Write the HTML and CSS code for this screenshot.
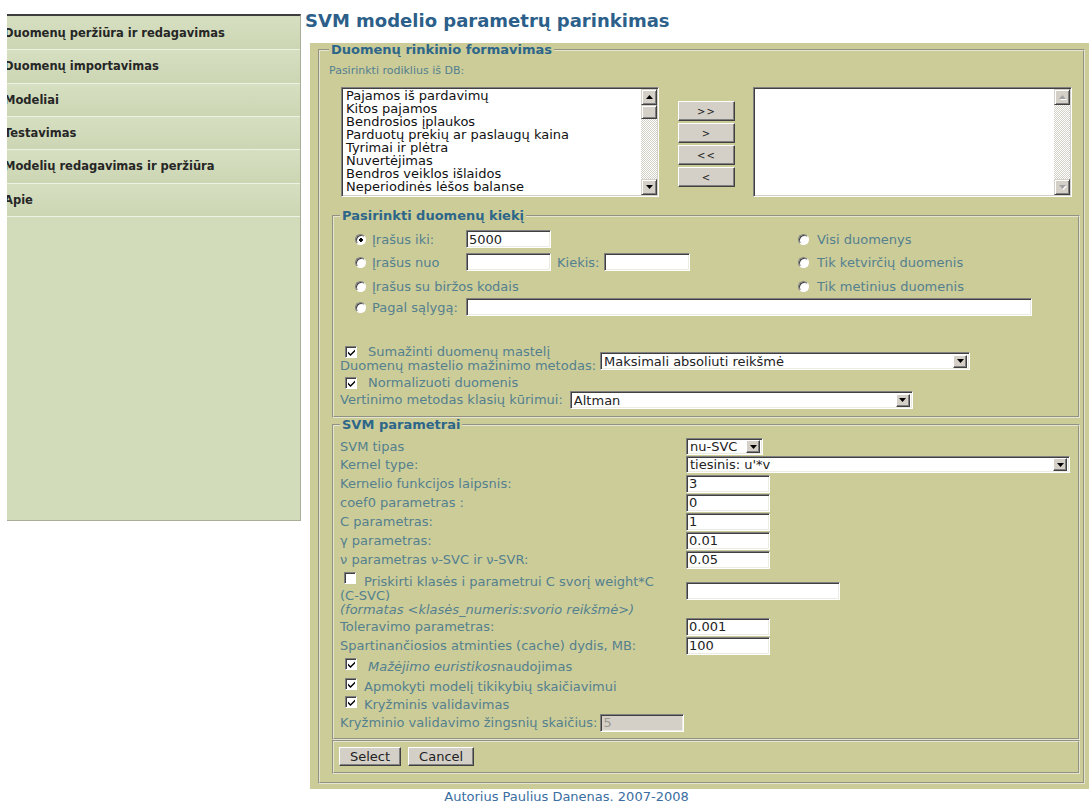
FILE: index.html
```html
<!DOCTYPE html>
<html lang="lt">
<head>
<meta charset="utf-8">
<title>SVM modelio parametrų parinkimas</title>
<link rel="stylesheet" href="styles.css">
</head>
<body>
<div class="page">
  <nav class="sidebar">
    <ul class="menu">
      <li>Duomenų peržiūra ir redagavimas</li>
      <li>Duomenų importavimas</li>
      <li>Modeliai</li>
      <li>Testavimas</li>
      <li>Modelių redagavimas ir peržiūra</li>
      <li>Apie</li>
    </ul>
  </nav>

  <main class="main">
    <h1 class="title">SVM modelio parametrų parinkimas</h1>

    <form class="panel">
      <fieldset class="frame">
        <legend>Duomenų rinkinio formavimas</legend>
        <div class="hint">Pasirinkti rodiklius iš DB:</div>

        <div class="picker">
          <div class="listbox source">
            <ul class="options">
              <li>Pajamos iš pardavimų</li>
              <li>Kitos pajamos</li>
              <li>Bendrosios įplaukos</li>
              <li>Parduotų prekių ar paslaugų kaina</li>
              <li>Tyrimai ir plėtra</li>
              <li>Nuvertėjimas</li>
              <li>Bendros veiklos išlaidos</li>
              <li>Neperiodinės lėšos balanse</li>
            </ul>
            <div class="vscroll">
              <span class="sb-btn"><svg width="7" height="4" viewBox="0 0 7 4"><path d="M3.5 0L7 4H0Z"/></svg></span>
              <span class="sb-thumb"></span>
              <span class="sb-track"></span>
              <span class="sb-btn"><svg width="7" height="4" viewBox="0 0 7 4"><path d="M0 0H7L3.5 4Z"/></svg></span>
            </div>
          </div>

          <div class="movers">
            <button type="button" class="btn mover">&gt;&gt;</button>
            <button type="button" class="btn mover">&gt;</button>
            <button type="button" class="btn mover">&lt;&lt;</button>
            <button type="button" class="btn mover">&lt;</button>
          </div>

          <div class="listbox target">
            <ul class="options"></ul>
            <div class="vscroll off">
              <span class="sb-btn"><svg width="7" height="4" viewBox="0 0 7 4"><path d="M3.5 0L7 4H0Z"/></svg></span>
              <span class="sb-track"></span>
              <span class="sb-btn"><svg width="7" height="4" viewBox="0 0 7 4"><path d="M0 0H7L3.5 4Z"/></svg></span>
            </div>
          </div>
        </div>

        <fieldset class="group amount-group">
          <legend>Pasirinkti duomenų kiekį</legend>
          <div class="amount">
            <div class="opt">
              <input type="radio" class="radio" name="kiekis" checked>
              <span class="opt-label">Įrašus iki:</span>
              <input type="text" class="field w85" value="5000">
            </div>
            <div class="opt right">
              <input type="radio" class="radio" name="laikotarpis">
              <span>Visi duomenys</span>
            </div>

            <div class="opt">
              <input type="radio" class="radio" name="kiekis">
              <span class="opt-label">Įrašus nuo</span>
              <input type="text" class="field w85" value="">
              <span class="kiekis">Kiekis:</span>
              <input type="text" class="field w86" value="">
            </div>
            <div class="opt right">
              <input type="radio" class="radio" name="laikotarpis">
              <span>Tik ketvirčių duomenis</span>
            </div>

            <div class="opt">
              <input type="radio" class="radio" name="kiekis">
              <span>Įrašus su biržos kodais</span>
            </div>
            <div class="opt right">
              <input type="radio" class="radio" name="laikotarpis">
              <span>Tik metinius duomenis</span>
            </div>

            <div class="opt wide">
              <input type="radio" class="radio" name="kiekis">
              <span class="opt-label">Pagal sąlygą:</span>
              <input type="text" class="field w566" value="">
            </div>
          </div>

          <div class="chk-row scale">
            <span class="box"><svg width="7" height="7" viewBox="0 0 7 7"><path d="M0 2.5L2.5 5L7 0.5V2.5L2.5 7L0 4.5Z"/></svg></span>
            <span>Sumažinti duomenų mastelį</span>
          </div>
          <div class="sel-row first">
            <span class="sel-label">Duomenų mastelio mažinimo metodas:</span>
            <div class="select w370">
              <span class="sel-value">Maksimali absoliuti reikšmė</span>
              <span class="sel-arrow"><svg width="7" height="4" viewBox="0 0 7 4"><path d="M0 0H7L3.5 4Z"/></svg></span>
            </div>
          </div>
          <div class="chk-row norm">
            <span class="box"><svg width="7" height="7" viewBox="0 0 7 7"><path d="M0 2.5L2.5 5L7 0.5V2.5L2.5 7L0 4.5Z"/></svg></span>
            <span>Normalizuoti duomenis</span>
          </div>
          <div class="sel-row last">
            <span class="sel-label">Vertinimo metodas klasių kūrimui:</span>
            <div class="select w343">
              <span class="sel-value">Altman</span>
              <span class="sel-arrow"><svg width="7" height="4" viewBox="0 0 7 4"><path d="M0 0H7L3.5 4Z"/></svg></span>
            </div>
          </div>
        </fieldset>

        <fieldset class="group svm-group">
          <legend>SVM parametrai</legend>

          <div class="prm r-type">
            <span class="prm-label">SVM tipas</span>
            <div class="select w77 short">
              <span class="sel-value">nu-SVC</span>
              <span class="sel-arrow"><svg width="7" height="4" viewBox="0 0 7 4"><path d="M0 0H7L3.5 4Z"/></svg></span>
            </div>
          </div>
          <div class="prm r-kernel">
            <span class="prm-label">Kernel type:</span>
            <div class="select w384 short">
              <span class="sel-value">tiesinis: u'*v</span>
              <span class="sel-arrow"><svg width="7" height="4" viewBox="0 0 7 4"><path d="M0 0H7L3.5 4Z"/></svg></span>
            </div>
          </div>
          <div class="prm">
            <span class="prm-label">Kernelio funkcijos laipsnis:</span>
            <input type="text" class="field w84" value="3">
          </div>
          <div class="prm">
            <span class="prm-label">coef0 parametras :</span>
            <input type="text" class="field w84" value="0">
          </div>
          <div class="prm">
            <span class="prm-label">C parametras:</span>
            <input type="text" class="field w84" value="1">
          </div>
          <div class="prm">
            <span class="prm-label">γ parametras:</span>
            <input type="text" class="field w84" value="0.01">
          </div>
          <div class="prm">
            <span class="prm-label">ν parametras ν-SVC ir ν-SVR:</span>
            <input type="text" class="field w84" value="0.05">
          </div>

          <div class="prm weights">
            <div class="prm-label weight-text">
              <span class="box plain"></span><span class="weight-line">Priskirti klasės i parametrui C svorį weight*C</span>
              <span class="weight-line">(C-SVC)</span>
              <em class="weight-line">(formatas &lt;klasės_numeris:svorio reikšmė&gt;)</em>
            </div>
            <input type="text" class="field w154" value="">
          </div>

          <div class="prm">
            <span class="prm-label">Toleravimo parametras:</span>
            <input type="text" class="field w84" value="0.001">
          </div>
          <div class="prm">
            <span class="prm-label">Spartinančiosios atminties (cache) dydis, MB:</span>
            <input type="text" class="field w84" value="100">
          </div>

          <div class="chk-row heur">
            <span class="box"><svg width="7" height="7" viewBox="0 0 7 7"><path d="M0 2.5L2.5 5L7 0.5V2.5L2.5 7L0 4.5Z"/></svg></span>
            <span><em>Mažėjimo euristikos</em>naudojimas</span>
          </div>
          <div class="chk-row tight">
            <span class="box"><svg width="7" height="7" viewBox="0 0 7 7"><path d="M0 2.5L2.5 5L7 0.5V2.5L2.5 7L0 4.5Z"/></svg></span>
            <span>Apmokyti modelį tikikybių skaičiavimui</span>
          </div>
          <div class="chk-row tight short">
            <span class="box"><svg width="7" height="7" viewBox="0 0 7 7"><path d="M0 2.5L2.5 5L7 0.5V2.5L2.5 7L0 4.5Z"/></svg></span>
            <span>Kryžminis validavimas</span>
          </div>
          <div class="folds">
            <span>Kryžminio validavimo žingsnių skaičius:</span>
            <input type="text" class="field w84 disabled" value="5" disabled>
          </div>
        </fieldset>

        <div class="actions">
          <button type="button" class="btn action">Select</button>
          <button type="button" class="btn action">Cancel</button>
        </div>
      </fieldset>
    </form>
  </main>
</div>

<footer class="footer">Autorius Paulius Danenas. 2007-2008</footer>
</body>
</html>
```

FILE: styles.css
```css
* { box-sizing: border-box; }

html, body { margin: 0; padding: 0; }

body {
  width: 1089px;
  height: 801px;
  overflow: hidden;
  background: #fff;
  font-family: "DejaVu Sans", Verdana, sans-serif;
  color: #222;
  --label: #54808e;
  --legend: #2d6689;
  --olive: #cccc99;
  --face: #d4d0c8;
}

.page { display: flex; align-items: flex-start; }

/* ---------- left navigation ---------- */
.sidebar {
  flex: none;
  width: 294px;
  height: 507px;
  margin: 14px 0 0 7px;
  background: #d2dbba;
  border-top: 2px solid #3d3d3d;
  border-right: 1px solid #a9ae98;
  border-bottom: 1px solid #a9ae98;
  overflow: hidden;
}

.menu { list-style: none; margin: 0; padding: 1px 0 0; }

.menu li {
  height: 33.33px;
  line-height: 32px;
  border-bottom: 1px solid #eef2e3;
  background: linear-gradient(#d6dfc1, #ccd6b3);
  font-size: 11.5px;
  font-weight: bold;
  color: #262626;
  text-indent: -3px;
  white-space: nowrap;
}

/* ---------- main column ---------- */
.main { flex: 1; min-width: 0; padding-left: 4px; }

.title {
  margin: 11px 0 12px;
  font-size: 18px;
  line-height: 20px;
  font-weight: bold;
  color: #2c5f8a;
}

.panel {
  height: 746px;
  margin-left: 5px;
  padding: 0 0 0 8px;
  background: var(--olive);
}

fieldset { min-width: 0; }

legend {
  padding: 0 2px;
  font-size: 13px;
  line-height: 14px;
  font-weight: bold;
  color: var(--legend);
}

.frame {
  margin: 0;
  padding: 0 3px 8px 9px;
  border: 2px groove #e6e6d0;
  width: 767px;
}

.hint {
  margin-top: 7px;
  font-size: 11px;
  line-height: 14px;
  color: var(--label);
}

/* ---------- list pickers ---------- */
.picker {
  display: flex;
  align-items: flex-start;
  margin-top: 9px;
  padding-left: 12px;
}

.listbox {
  display: flex;
  width: 318px;
  height: 110px;
  background: #fff;
  border: 1px solid;
  border-color: #808080 #fff #fff #808080;
  box-shadow: inset 1px 1px 0 #404040, inset -1px -1px 0 var(--face);
}

.listbox.target { width: 319px; }

.options {
  flex: 1;
  margin: 0;
  padding: 1px 0 0 4px;
  list-style: none;
  font-size: 13px;
  line-height: 13px;
  color: #111;
  white-space: nowrap;
  overflow: hidden;
}

.vscroll {
  flex: none;
  width: 16px;
  margin: 1px 1px 1px 0;
  display: flex;
  flex-direction: column;
}

.sb-btn {
  flex: none;
  height: 16px;
  display: flex;
  align-items: center;
  justify-content: center;
  background: var(--face);
  border: 1px solid;
  border-color: var(--face) #404040 #404040 var(--face);
  box-shadow: inset 1px 1px 0 #fff, inset -1px -1px 0 #808080;
}

.sb-btn svg { fill: #000; }

.sb-thumb {
  flex: none;
  height: 14px;
  background: var(--face);
  border: 1px solid;
  border-color: var(--face) #404040 #404040 var(--face);
  box-shadow: inset 1px 1px 0 #fff, inset -1px -1px 0 #808080;
}

.sb-track {
  flex: 1;
  background: repeating-conic-gradient(#fff 0 25%, var(--face) 0 50%) 0 0 / 2px 2px;
}

.vscroll.off .sb-btn svg { fill: #a0a0a0; filter: drop-shadow(1px 1px 0 #fff); }

.movers {
  display: flex;
  flex-direction: column;
  gap: 2px;
  margin: 14px 18px 0 19px;
}

.btn {
  padding: 0;
  font-family: inherit;
  color: #222;
  background: var(--face);
  border: 1px solid;
  border-color: #fff #404040 #404040 #fff;
  box-shadow: inset -1px -1px 0 #808080;
}

.mover {
  width: 57px;
  height: 20px;
  font-size: 10px;
  letter-spacing: 1px;
}

/* ---------- inner groups ---------- */
.group {
  margin: 12px 0 0 3px;
  padding: 5px 0 7px 6px;
  border: 2px groove #e6e6d0;
  font-size: 13px;
  color: var(--label);
}

.field {
  height: 18px;
  padding: 0 2px;
  font-family: inherit;
  font-size: 13px;
  color: #222;
  background: #fff;
  border: 1px solid;
  border-color: #808080 #fff #fff #808080;
  box-shadow: inset 1px 1px 0 #404040, inset -1px -1px 0 #ecebe4;
  outline: none;
}

.w84 { width: 84px; }
.w85 { width: 85px; }
.w86 { width: 86px; }
.w154 { width: 154px; }
.w566 { width: 566px; }

.field.disabled { background: var(--face); color: #9a9890; }

.amount {
  display: grid;
  grid-template-columns: 458px 1fr;
  grid-template-rows: 22px 24px 24px 18px;
}

.opt { display: flex; align-items: center; padding-left: 15px; white-space: nowrap; }
.opt.right { padding-left: 0; }
.opt.right .radio { margin-right: 8px; }
.opt.wide { grid-column: 1 / 3; }

.opt-label { width: 94px; }
.kiekis { margin: 0 5px 0 6px; }

.radio {
  appearance: none;
  flex: none;
  width: 11px;
  height: 11px;
  margin: 0 6px 0 0;
  border-radius: 50%;
  background: #fff;
  border: 1px solid;
  border-color: #808080 #fff #fff #808080;
  box-shadow: inset 1px 1px 0 #404040;
}

.radio:checked {
  background: radial-gradient(circle at 55% 55%, #000 0 1.6px, #fff 2px);
}

.chk-row {
  display: flex;
  align-items: flex-start;
  padding-left: 5px;
  height: 14px;
  line-height: 14px;
  white-space: nowrap;
}

.box {
  flex: none;
  width: 12px;
  height: 12px;
  margin: 0 11px 0 0;
  display: flex;
  align-items: center;
  justify-content: center;
  background: #fff;
  border: 1px solid;
  border-color: #808080 #fff #fff #808080;
  box-shadow: inset 1px 1px 0 #404040;
}

.box svg { fill: #000; margin: 1px 0 0 1px; }

.chk-row.scale { margin-top: 29px; }
.chk-row.norm { margin-top: 3px; }

.sel-row {
  display: flex;
  align-items: flex-start;
  white-space: nowrap;
}

.sel-label { margin-right: 4px; line-height: 14px; }
.sel-row.first { margin-top: -7px; }
.sel-row.first .sel-label { padding-top: 7px; }
.sel-row.last { margin-top: 1px; }
.sel-row.last .sel-label { padding-top: 2px; margin-right: 7px; }

.select {
  display: flex;
  align-items: center;
  height: 18px;
  background: #fff;
  border: 1px solid;
  border-color: #808080 #fff #fff #808080;
  box-shadow: inset 1px 1px 0 #404040, inset -1px -1px 0 #ecebe4;
  padding: 0 2px 0 3px;
  color: #222;
}

.select.short { height: 17px; }

.w370 { width: 370px; }
.w343 { width: 343px; }
.w77 { width: 77px; }
.w384 { width: 384px; }

.sel-value { flex: 1; overflow: hidden; white-space: nowrap; }

.sel-arrow {
  flex: none;
  width: 14px;
  height: 13px;
  display: flex;
  align-items: center;
  justify-content: center;
  background: var(--face);
  border: 1px solid;
  border-color: #fff #404040 #404040 #fff;
  box-shadow: inset -1px -1px 0 #808080;
}

.sel-arrow svg { fill: #000; }

/* ---------- SVM parameters ---------- */
.svm-group { margin-top: 0; padding: 6px 0 6px 6px; }

.prm {
  display: flex;
  align-items: center;
  height: 19px;
  white-space: nowrap;
}

.prm-label { width: 346px; flex: none; }

.prm.r-type { height: 17px; }

.prm.weights {
  height: auto;
  align-items: flex-start;
  margin-top: 6px;
}

.weight-text { display: block; line-height: 14px; white-space: normal; }
.weight-text .box { display: inline-flex; vertical-align: top; margin: -3px 8px 0 4px; }
.weight-line { display: block; }
.weight-text .box + .weight-line { display: inline; }
.weight-text em { font-style: italic; }

.prm.weights .field { margin-top: 7px; }

.chk-row.heur { margin-top: 2px; height: 20px; line-height: 20px; }
.chk-row.heur em { font-style: italic; }
.chk-row.tight { height: 20px; line-height: 20px; }
.chk-row.tight.short { height: 16px; line-height: 16px; }
.chk-row .box { margin-top: 1px; }
.chk-row.heur .box { margin-right: 11px; }
.chk-row.tight .box { margin-right: 7px; }
.chk-row.tight.short .box { margin-top: -1px; }

.folds { display: flex; align-items: center; height: 19px; white-space: nowrap; }
.folds span { margin-right: 3px; }

/* ---------- action buttons ---------- */
.actions {
  display: flex;
  gap: 7px;
  margin-left: 3px;
  height: 34px;
  padding: 5px 0 0 5px;
  border: 2px groove #e6e6d0;
}

.action {
  height: 19px;
  padding: 0 10px;
  font-size: 13px;
}

/* ---------- footer ---------- */
.footer {
  margin-top: 1px;
  padding-left: 44px;
  text-align: center;
  font-size: 13px;
  line-height: 14px;
  color: #3a6ea0;
}
```
